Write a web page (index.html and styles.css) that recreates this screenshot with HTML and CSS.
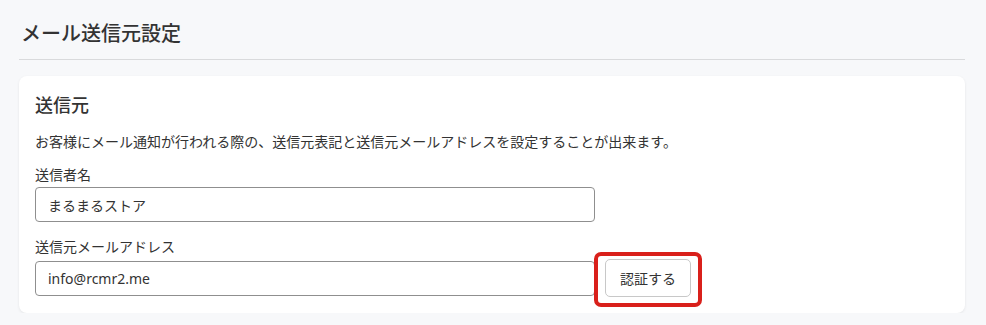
FILE: index.html
```html
<!DOCTYPE html>
<html lang="ja">
<head>
  <meta charset="UTF-8">
  <meta name="viewport" content="width=device-width, initial-scale=1.0">
  <title>メール送信元設定</title>
  <link rel="stylesheet" href="styles.css">
</head>
<body>
  <div class="page">
    <div class="page-header">
      <h1>メール送信元設定</h1>
    </div>

    <div class="card">
      <h2>送信元</h2>
      <p class="desc">お客様にメール通知が行われる際の、送信元表記と送信元メールアドレスを設定することが出来ます。</p>

      <div class="field">
        <label for="sender-name">送信者名</label>
        <input type="text" id="sender-name" value="まるまるストア">
      </div>

      <div class="field field-last">
        <label for="sender-mail">送信元メールアドレス</label>
        <div class="field-row">
          <input type="text" id="sender-mail" value="info@rcmr2.me">
          <div class="btn-wrap">
            <button type="button" class="btn">認証する</button>
            <span class="highlight"></span>
          </div>
        </div>
      </div>
    </div>
  </div>
</body>
</html>
```

FILE: styles.css
```css
* {
  margin: 0;
  padding: 0;
  box-sizing: border-box;
}

body {
  font-family: 'Noto Sans', 'Noto Sans CJK JP', sans-serif;
  background-color: #f7f8fa;
  color: #333;
}

.page {
  padding: 0 21px 0 19px;
}

.page-header {
  padding: 20px 2px 11px;
  border-bottom: 1px solid #d9dadc;
}

h1 {
  font-size: 20px;
  line-height: 28px;
  font-weight: 500;
  color: #333;
}

.card {
  margin-top: 16px;
  padding: 16px 16px 16px;
  background-color: #fff;
  border-radius: 8px;
  box-shadow: 0 1px 3px rgba(0, 0, 0, 0.08);
}

h2 {
  font-size: 18px;
  line-height: 26px;
  font-weight: 500;
}

.desc {
  margin-top: 14px;
  font-size: 14px;
  line-height: 20px;
}

.field {
  margin-top: 13px;
}

.field-last {
  margin-top: 15px;
}

label {
  display: block;
  font-size: 14px;
  line-height: 20px;
  margin-bottom: 2px;
}

input[type="text"] {
  display: block;
  width: 560px;
  height: 35px;
  padding: 0 12px;
  font-family: inherit;
  font-size: 14px;
  color: #333;
  border: 1px solid #8f8f8f;
  border-radius: 4px;
  outline: none;
}

.field-row {
  display: flex;
  align-items: center;
  gap: 10px;
}

.btn-wrap {
  position: relative;
}

.btn {
  display: block;
  width: 86px;
  height: 38px;
  font-family: inherit;
  font-size: 14px;
  color: #333;
  background-color: #fff;
  border: 1px solid #c8c8c8;
  border-radius: 5px;
  cursor: pointer;
}

.highlight {
  position: absolute;
  top: -7px;
  bottom: -10px;
  left: -11px;
  right: -11px;
  border: 4px solid #d9201b;
  border-radius: 7px;
  pointer-events: none;
}
```
